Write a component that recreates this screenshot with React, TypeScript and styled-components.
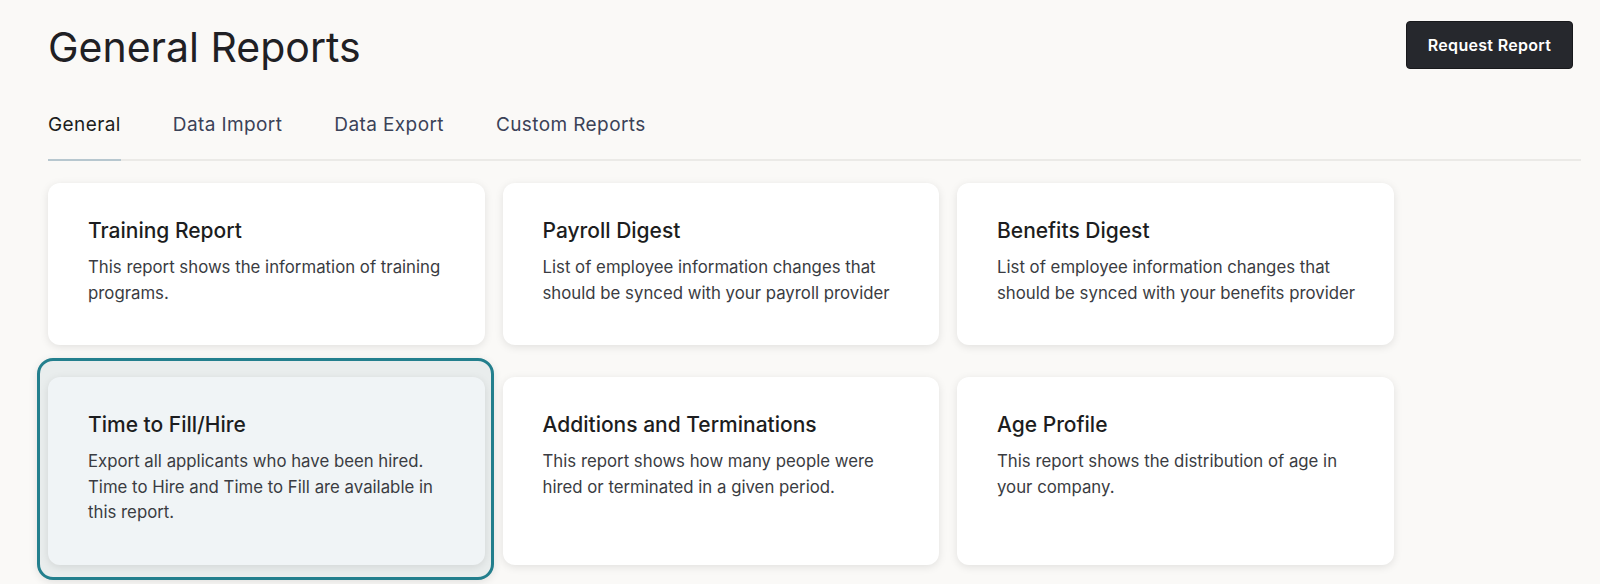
import React from 'react';
import styled, { createGlobalStyle } from 'styled-components';

const GlobalStyle = createGlobalStyle`
  html, body {
    margin: 0;
    background: #faf9f7;
    font-family: Inter, "Liberation Sans", sans-serif;
    color: #1f2024;
  }
`;

// 페이지 전체
const Page = styled.div`
  min-height: 584px;
  padding: 21px 19px 0 48px;
  box-sizing: border-box;
  background: #faf9f7;
`;

const Header = styled.div`
  display: flex;
  justify-content: space-between;
  align-items: flex-start;
  padding-right: 8px;
`;

const Title = styled.h1`
  margin: 1px 0 0;
  font-size: 41px;
  font-weight: 400;
  line-height: 50px;
  color: #1f2024;
`;

const RequestButton = styled.button`
  width: 167px;
  height: 48px;
  padding: 0;
  background: #26282d;
  color: #fff;
  border: 1px solid #18191c;
  border-radius: 4px;
  font-family: inherit;
  font-size: 16px;
  font-weight: 600;
  letter-spacing: 0.3px;
  cursor: pointer;
`;

// 탭
const Tabs = styled.div`
  display: flex;
  gap: 52px;
  margin-top: 41px;
  border-bottom: 2px solid #ebeae7;
`;

const Tab = styled.div<{ $active?: boolean }>`
  font-size: 19px;
  letter-spacing: 0.4px;
  line-height: 24px;
  padding-bottom: 22px;
  margin-bottom: -2px;
  color: ${p => (p.$active ? '#1c1d20' : '#3b4257')};
  border-bottom: 2px solid ${p => (p.$active ? '#b7c7cf' : 'transparent')};
`;

// 카드 그리드
const Grid = styled.div`
  display: grid;
  grid-template-columns: repeat(3, 436.5px);
  column-gap: 18px;
  row-gap: 32px;
  margin-top: 22px;
`;

// 선택된 카드 테두리
const Ring = styled.div`
  display: flex;
  margin: -19px -9px -15px -11px;
  padding: 16px 6px 12px 8px;
  border: 3px solid #237f8d;
  border-radius: 16px;
  background: #e9eded;
  box-shadow: 0 2px 8px rgba(0, 0, 0, 0.1);
`;

const Card = styled.div<{ $selected?: boolean }>`
  flex: 1;
  background: ${p => (p.$selected ? '#f0f4f6' : '#ffffff')};
  border-radius: 12px;
  box-shadow: 0 2px 8px rgba(0, 0, 0, 0.1);
  padding: 34px 24px 39px 40px;
  box-sizing: border-box;
`;

const CardTitle = styled.h2`
  margin: 0 0 10px;
  font-size: 21px;
  font-weight: 500;
  line-height: 28px;
  color: #1c1d20;
`;

const CardText = styled.p`
  margin: 0;
  font-size: 16.8px;
  line-height: 25.5px;
  color: #3a3c42;
`;

const reports = [
  { title: 'Training Report', text: 'This report shows the information of training programs.' },
  { title: 'Payroll Digest', text: 'List of employee information changes that should be synced with your payroll provider' },
  { title: 'Benefits Digest', text: 'List of employee information changes that should be synced with your benefits provider' },
  { title: 'Time to Fill/Hire', text: 'Export all applicants who have been hired. Time to Hire and Time to Fill are available in this report.', selected: true },
  { title: 'Additions and Terminations', text: 'This report shows how many people were hired or terminated in a given period.' },
  { title: 'Age Profile', text: 'This report shows the distribution of age in your company.' },
];

const App = () => (
  <>
    <GlobalStyle />
    <Page>
      <Header>
        <Title>General Reports</Title>
        <RequestButton>Request Report</RequestButton>
      </Header>
      <Tabs>
        <Tab $active>General</Tab>
        <Tab>Data Import</Tab>
        <Tab>Data Export</Tab>
        <Tab>Custom Reports</Tab>
      </Tabs>
      <Grid>
        {reports.map(r => {
          const card = (
            <Card key={r.title} $selected={r.selected}>
              <CardTitle>{r.title}</CardTitle>
              <CardText>{r.text}</CardText>
            </Card>
          );
          return r.selected ? <Ring key={r.title}>{card}</Ring> : card;
        })}
      </Grid>
    </Page>
  </>
);

export default App;
